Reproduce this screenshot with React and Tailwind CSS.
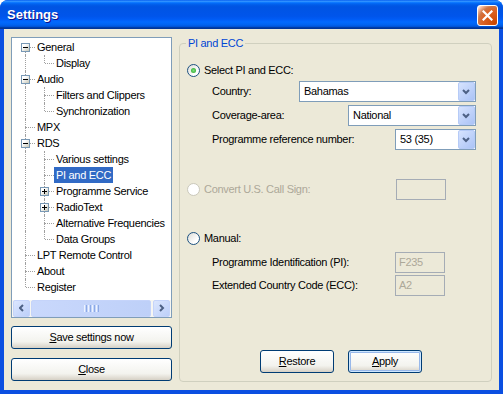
import React from 'react';

const treeRows = [
    { label: 'General', depth: 0, box: 'minus', first: true, cont: [] },
    { label: 'Display', depth: 1, last: true, cont: [true] },
    { label: 'Audio', depth: 0, box: 'minus', cont: [] },
    { label: 'Filters and Clippers', depth: 1, cont: [true] },
    { label: 'Synchronization', depth: 1, last: true, cont: [true] },
    { label: 'MPX', depth: 0, cont: [] },
    { label: 'RDS', depth: 0, box: 'minus', cont: [] },
    { label: 'Various settings', depth: 1, cont: [true] },
    { label: 'PI and ECC', depth: 1, selected: true, cont: [true] },
    { label: 'Programme Service', depth: 1, box: 'plus', cont: [true] },
    { label: 'RadioText', depth: 1, box: 'plus', cont: [true] },
    { label: 'Alternative Frequencies', depth: 1, cont: [true] },
    { label: 'Data Groups', depth: 1, last: true, cont: [true] },
    { label: 'LPT Remote Control', depth: 0, cont: [] },
    { label: 'About', depth: 0, cont: [] },
    { label: 'Register', depth: 0, last: true, cont: [] },
];

const ExpandBox = ({ type }) => (
    <div className="absolute left-[5px] top-[4px] w-[9px] h-[9px] border border-[#7898b5] bg-[linear-gradient(135deg,#ffffff_30%,#c6c6b6)] z-10">
        <div className="absolute left-[1px] right-[1px] top-[3px] h-[1px] bg-black" />
        {type === 'plus' && <div className="absolute top-[1px] bottom-[1px] left-[3px] w-[1px] bg-black" />}
    </div>
);

const TreeRow = ({ row }) => {
    const cells = [];
    for (let c = 0; c <= row.depth; c++) {
        if (c < row.depth) {
            cells.push(
                <div key={c} className="relative w-[19px] h-full shrink-0">
                    {row.cont[c] && <div className="absolute left-[9px] top-0 h-[16px] border-l border-dotted border-[#a0a0a0]" />}
                </div>
            );
        } else {
            cells.push(
                <div key={c} className="relative w-[19px] h-full shrink-0">
                    {!row.first && <div className="absolute left-[9px] top-0 h-[8px] border-l border-dotted border-[#a0a0a0]" />}
                    {!row.last && <div className="absolute left-[9px] top-[8px] h-[8px] border-l border-dotted border-[#a0a0a0]" />}
                    <div className="absolute left-[10px] right-0 top-[8px] border-t border-dotted border-[#a0a0a0]" />
                    {row.box && <ExpandBox type={row.box} />}
                </div>
            );
        }
    }
    return (
        <div className="flex h-[16px]">
            {cells}
            <span className={`px-[2px] leading-[16px] whitespace-nowrap ${row.selected ? 'bg-[#316ac5] text-white' : 'text-black'}`}>
                {row.label}
            </span>
        </div>
    );
};

const Chevron = ({ dir = 'down' }) => {
    const paths = {
        down: 'M1 1 L4 4 L7 1',
        left: 'M4 1 L1 4 L4 7',
        right: 'M1 1 L4 4 L1 7',
    };
    const size = dir === 'down' ? { w: 8, h: 5 } : { w: 5, h: 8 };
    return (
        <svg width={size.w + 1} height={size.h + 1} viewBox={`0 0 ${size.w + 1} ${size.h + 1}`}>
            <path d={paths[dir]} fill="none" stroke="#4d6185" strokeWidth="2" />
        </svg>
    );
};

const ScrollBtn = ({ dir }) => (
    <div className="w-[17px] h-[17px] rounded-[2px] border border-[#c5d4fa] bg-[linear-gradient(135deg,#dbe6fe,#bccff9)] flex items-center justify-center">
        <Chevron dir={dir} />
    </div>
);

const Combo = ({ value, width }) => (
    <div className={`h-[21px] border border-[#7f9db9] bg-white flex items-center ${width}`}>
        <span className="flex-1 pl-[4px] text-black">{value}</span>
        <div className="w-[17px] h-full rounded-[2px] border border-[#b6cbf7] bg-[linear-gradient(135deg,#d6e3fe,#abc3f6)] flex items-center justify-center">
            <Chevron dir="down" />
        </div>
    </div>
);

const Radio = ({ checked, disabled }) => (
    <div className={`w-[13px] h-[13px] rounded-full border flex items-center justify-center shrink-0 ${disabled ? 'border-[#cac8bb] bg-white' : 'border-[#1c5180] bg-[linear-gradient(135deg,#dcdcd7,#ffffff_70%)]'}`}>
        {checked && <div className="w-[5px] h-[5px] rounded-full bg-[radial-gradient(circle,#7ee07e,#21a121)]" />}
    </div>
);

const XpButton = ({ children, className = '', def }) => (
    <button className={`h-[23px] rounded-[3px] border border-[#003c74] bg-[linear-gradient(to_bottom,#ffffff,#f3f3ee_70%,#d6d0c5)] text-[11px] tracking-[-0.3px] text-black ${def ? 'shadow-[inset_0_0_0_1px_#cee7ff,inset_0_0_0_2px_#98b8ea]' : ''} ${className}`}>
        {children}
    </button>
);

const DisabledInput = ({ value }) => (
    <div className="w-[50px] h-[21px] border border-[#a5acb5] bg-[#ece9d8] pl-[3px] leading-[19px] text-[#aca899]">{value}</div>
);

export default function App() {
    return (
        <div className="w-[503px] h-[394px] flex flex-col bg-[#0b4fe1] rounded-t-[8px] overflow-hidden font-['Liberation_Sans',Arial,sans-serif] text-[11px] tracking-[-0.3px]">
            {/* Title bar */}
            <div className="h-[29px] shrink-0 flex items-start justify-between pl-[7px] pr-[5px] bg-[linear-gradient(to_bottom,#0058ee_0%,#3593ff_4%,#288eff_6%,#127dff_8%,#036ffc_10%,#0262ee_14%,#0057e5_20%,#0054e3_24%,#0055eb_56%,#005bf5_66%,#026afe_76%,#0062ef_86%,#0052d6_92%,#0040ab_94%,#003092_100%)]">
                <span className="mt-[7px] text-white font-bold text-[13px] leading-[16px] tracking-normal [text-shadow:1px_1px_#0f1089]">Settings</span>
                <div className="mt-[5px] w-[21px] h-[21px] rounded-[3px] border border-white bg-[radial-gradient(circle_at_90%_90%,#cc4600_0%,#dc6527_55%,#cd7546_70%,#ffccb2_90%,#ffffff_100%)] flex items-center justify-center">
                    <svg width="11" height="11" viewBox="0 0 11 11">
                        <path d="M1.5 1.5 L9.5 9.5 M9.5 1.5 L1.5 9.5" stroke="white" strokeWidth="2.2" strokeLinecap="square" />
                    </svg>
                </div>
            </div>

            {/* Client area */}
            <div className="flex-1 mx-[4px] mb-[4px] bg-[#ece9d8] flex">
                {/* Left column */}
                <div className="ml-[7px] mt-[8px] w-[161px] flex flex-col">
                    <div className="h-[281px] border border-[#7f9db9] bg-white flex flex-col">
                        <div className="flex-1 pt-[1px] pl-[4px] overflow-hidden">
                            {treeRows.map((row) => (
                                <TreeRow key={row.label} row={row} />
                            ))}
                        </div>
                        <div className="h-[17px] flex items-center px-[1px] bg-[#f6f6f2]">
                            <ScrollBtn dir="left" />
                            <div className="ml-[1px] w-[120px] h-[17px] rounded-[2px] border border-[#c5d4fa] bg-[linear-gradient(to_right,#c9d8fc,#bed0f8)] flex items-center justify-center gap-[1px]">
                                <div className="w-[1px] h-[7px] bg-[#eef4fe]" />
                                <div className="w-[1px] h-[7px] bg-[#8caae6]" />
                                <div className="w-[1px] h-[7px] bg-[#eef4fe]" />
                                <div className="w-[1px] h-[7px] bg-[#8caae6]" />
                                <div className="w-[1px] h-[7px] bg-[#eef4fe]" />
                                <div className="w-[1px] h-[7px] bg-[#8caae6]" />
                                <div className="w-[1px] h-[7px] bg-[#eef4fe]" />
                                <div className="w-[1px] h-[7px] bg-[#8caae6]" />
                            </div>
                            <div className="ml-[2px]">
                                <ScrollBtn dir="right" />
                            </div>
                        </div>
                    </div>
                    <XpButton className="mt-[8px] w-full">
                        <span className="underline">S</span>ave settings now
                    </XpButton>
                    <XpButton className="mt-[9px] w-full">
                        <span className="underline">C</span>lose
                    </XpButton>
                </div>

                {/* Right group */}
                <fieldset className="ml-[7px] mt-[8px] w-[313px] h-[345px] border border-[#d0d0bf] rounded-[4px]">
                    <legend className="ml-[6px] px-[2px] leading-[13px] text-[#0046d5]">PI and ECC</legend>

                    <div className="mt-[12px] h-[16px] pl-[7px] flex items-center gap-[4px]">
                        <Radio checked />
                        <span>Select PI and ECC:</span>
                    </div>
                    <div className="mt-[3px] h-[21px] pl-[32px] flex items-center">
                        <span className="w-[87px]">Country:</span>
                        <Combo value="Bahamas" width="w-[177px]" />
                    </div>
                    <div className="mt-[3px] h-[21px] pl-[32px] flex items-center">
                        <span className="w-[136px]">Coverage-area:</span>
                        <Combo value="National" width="w-[128px]" />
                    </div>
                    <div className="mt-[3px] h-[21px] pl-[32px] flex items-center">
                        <span className="w-[183px]">Programme reference number:</span>
                        <Combo value="53 (35)" width="w-[81px]" />
                    </div>

                    <div className="mt-[29px] h-[21px] pl-[7px] flex items-center">
                        <Radio disabled />
                        <span className="ml-[4px] w-[192px] text-[#aca899]">Convert U.S. Call Sign:</span>
                        <DisabledInput value="" />
                    </div>

                    <div className="mt-[30px] h-[16px] pl-[7px] flex items-center gap-[4px]">
                        <Radio />
                        <span>Manual:</span>
                    </div>
                    <div className="mt-[6px] h-[21px] pl-[32px] flex items-center">
                        <span className="w-[183px]">Programme Identification (PI):</span>
                        <DisabledInput value="F235" />
                    </div>
                    <div className="mt-[2px] h-[21px] pl-[32px] flex items-center">
                        <span className="w-[183px]">Extended Country Code (ECC):</span>
                        <DisabledInput value="A2" />
                    </div>

                    <div className="mt-[54px] pl-[80px] flex gap-[14px]">
                        <XpButton className="w-[74px]">
                            <span className="underline">R</span>estore
                        </XpButton>
                        <XpButton className="w-[74px]" def>
                            <span className="underline">A</span>pply
                        </XpButton>
                    </div>
                </fieldset>
            </div>
        </div>
    );
}
